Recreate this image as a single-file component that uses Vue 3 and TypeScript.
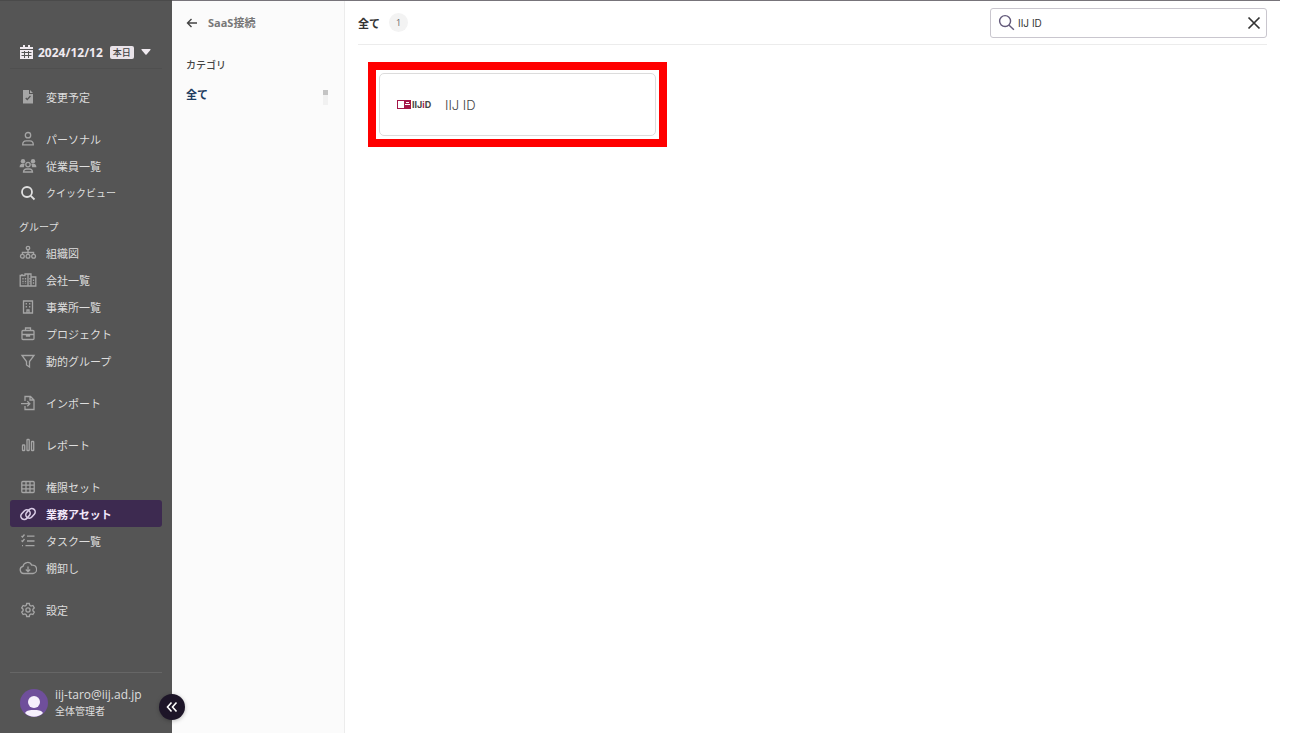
<script setup lang="ts">
import { ref } from 'vue'

type IconName =
  | 'file' | 'person' | 'people' | 'search' | 'org' | 'city' | 'building' | 'briefcase'
  | 'funnel' | 'import' | 'chart' | 'grid' | 'link' | 'tasks' | 'cloud' | 'gear'

interface NavItem { label: string; icon: IconName; active?: boolean; bright?: boolean }
interface NavGroup { heading?: string; items: NavItem[] }

const groups: NavGroup[] = [
  { items: [{ label: '変更予定', icon: 'file' }] },
  {
    items: [
      { label: 'パーソナル', icon: 'person' },
      { label: '従業員一覧', icon: 'people' },
      { label: 'クイックビュー', icon: 'search', bright: true },
    ],
  },
  {
    heading: 'グループ',
    items: [
      { label: '組織図', icon: 'org' },
      { label: '会社一覧', icon: 'city' },
      { label: '事業所一覧', icon: 'building' },
      { label: 'プロジェクト', icon: 'briefcase' },
      { label: '動的グループ', icon: 'funnel' },
    ],
  },
  { items: [{ label: 'インポート', icon: 'import' }] },
  { items: [{ label: 'レポート', icon: 'chart' }] },
  {
    items: [
      { label: '権限セット', icon: 'grid' },
      { label: '業務アセット', icon: 'link', active: true },
      { label: 'タスク一覧', icon: 'tasks' },
      { label: '棚卸し', icon: 'cloud' },
    ],
  },
  { items: [{ label: '設定', icon: 'gear' }] },
]

const icons: Record<IconName, string> = {
  file: '<path class="solid" fill-rule="evenodd" d="M4 2h6v4h4v9.5H4zM11 2l3 3h-3zM6.3 10.4l2 2 3.6-4-.9-.8-2.7 3-1.1-1.1z"/>',
  person: '<circle cx="9" cy="5.200" r="2.700"/><path d="M3.700 14.800c0-2.800 1.600-4 3.500-4h3.600c1.900 0 3.500 1.200 3.500 4z"/>',
  people: '<circle class="solid" cx="4" cy="4.300" r="2.200"/><circle class="solid" cx="14" cy="4.300" r="2.200"/><path class="solid" d="M.6 10.200c0-2.200 1-3.400 2.700-3.400h2.400L4.800 10.200zM17.400 10.200c0-2.200-1-3.400-2.700-3.400h-2.400l.9 3.400z"/><circle cx="9" cy="7.600" r="2.200"/><path d="M4.500 15c.2-2 1.300-3 3-3h3c1.700 0 2.800 1 3 3z"/>',
  search: '<circle cx="8" cy="8" r="5"/><path d="m11.800 11.800 3.700 3.700"/>',
  org: '<circle cx="9" cy="4" r="1.700"/><circle cx="3.400" cy="12.300" r="1.900"/><circle cx="9" cy="12.300" r="1.900"/><circle cx="14.600" cy="12.300" r="1.900"/><path d="M9 5.700v4.500M3.400 10.300V8.500h11.200v1.800"/>',
  city: '<path d="M9 15H1.200V4.500H3V3v1.500h3V3h3zM9 15V3h3v3h4.800v9zM12 6v9"/><path stroke-dasharray="1.400 1.400" d="M4 7v6M6.500 7v6M11 7v6M14.500 8.500v5"/>',
  building: '<path d="M4.500 3h9v12h-9zM8 15v-3h2v3"/><path stroke-dasharray="1.500 1.500" d="M7.300 5v6M10.700 5v6"/>',
  briefcase: '<rect x="3" y="5.500" width="12" height="9" rx="1"/><path d="M6.500 5.500V3h5v2.500M3 9.500h12M7.500 9.500v1.500h3V9.500"/>',
  funnel: '<path d="M3 3.500h12l-4.500 6V15l-3-2V9.500z"/>',
  import: '<path d="M6 7V2.500h5.500L15 6v9.500H6V12M11 2.500V6h4M2 9.700h8.500M8.300 7.200l2.500 2.500-2.500 2.500"/>',
  chart: '<rect x="3.500" y="9" width="2.200" height="5.500" rx=".6"/><rect x="8" y="3.500" width="2.200" height="11" rx=".6"/><rect x="12.500" y="5.500" width="2.200" height="9" rx=".6"/>',
  grid: '<rect x="2.800" y="3.500" width="12.400" height="11" rx="1"/><path d="M2.800 7.200h12.400M2.800 10.800h12.400M7 3.500v11M11 3.500v11"/>',
  link: '<rect x="1.200" y="6.300" width="10.600" height="6.800" rx="3.400" transform="rotate(-48 6.500 9.700)"/><rect x="6.200" y="4.900" width="10.600" height="6.800" rx="3.400" transform="rotate(-48 11.500 8.300)"/>',
  tasks: '<path d="m2.500 4 1 1 2-2.500M2.500 8.500l1 1 2-2.500M8 4.200h7.500M8 9h7.500M6.500 13.700h9M3 13.700h1"/>',
  cloud: '<path d="M5 14.500a3.600 3.600 0 0 1-1-7.100 4.600 4.600 0 0 1 8.700-1.300 4 4 0 0 1 1.300 8.400zM9 7.500v5M6.800 10.500 9 12.700l2.200-2.200"/>',
  gear: '<path d="m7.700 2.500-.5 1.900-1.200.7-1.900-.6-1.400 2.300 1.400 1.500v1.400l-1.400 1.500 1.400 2.300 1.900-.6 1.200.7.5 1.900h2.600l.5-1.900 1.200-.7 1.900.6 1.400-2.300-1.400-1.500V8.300l1.400-1.500-1.400-2.300-1.900.6-1.200-.7-.5-1.900z"/><circle cx="9" cy="9" r="2.100"/>',
}

const query = ref('IIJ ID')
</script>

<template>
  <div class="page">
    <aside class="sidebar">
      <button class="date" type="button">
        <svg class="calendar" viewBox="0 0 13 14" aria-hidden="true">
          <path d="M3 0h2v2h3V0h2v2h3v2H0V2h3zM0 5h13v9H0z" />
          <path class="lines" d="M1.500 7.500h10M1.500 10.500h10M4.500 6v7M8.500 6v7" />
        </svg>
        <span>2024/12/12</span>
        <span class="today">本日</span>
        <svg class="caret" viewBox="0 0 10 6" aria-hidden="true"><path d="M1 0h8q1 0 .4.900L5.600 5.500q-.6.600-1.200 0L.6.900Q0 0 1 0z" /></svg>
      </button>

      <nav class="nav">
        <section v-for="(group, i) in groups" :key="i">
          <h2 v-if="group.heading" class="nav-heading">{{ group.heading }}</h2>
          <a
            v-for="item in group.items"
            :key="item.label"
            href="#"
            class="nav-item"
            :class="{ active: item.active, bright: item.bright }"
          >
            <svg class="icon" viewBox="0 0 18 18" aria-hidden="true" v-html="icons[item.icon]"></svg>
            <span>{{ item.label }}</span>
          </a>
        </section>
      </nav>

      <div class="user">
        <svg class="avatar" viewBox="0 0 28 28" aria-hidden="true">
          <circle cx="14" cy="14" r="14" fill="#6f4f9b" />
          <circle cx="14" cy="13" r="6" fill="#f6f0fc" />
          <path d="M5 24c2-3 5-3 9-3s7 0 9 3c-5 5-13 5-18 0z" fill="#f6f0fc" />
        </svg>
        <div>
          <div class="email">iij-taro@iij.ad.jp</div>
          <div class="role">全体管理者</div>
        </div>
      </div>
      <button class="collapse" type="button" aria-label="メニューを閉じる">
        <svg viewBox="0 0 12 12" aria-hidden="true"><path d="M5.500 1.500 1.500 6l4 4.500M10.500 1.500 6.500 6l4 4.500" /></svg>
      </button>
    </aside>

    <aside class="panel">
      <a href="#" class="back">
        <svg viewBox="0 0 12 12" aria-hidden="true"><path d="M11 6H1.500M5.500 2l-4 4 4 4" /></svg>
        <span>SaaS接続</span>
      </a>
      <h2 class="panel-heading">カテゴリ</h2>
      <div class="category">
        <a href="#">全て</a>
        <span class="scroll"></span>
      </div>
    </aside>

    <main class="main">
      <header class="header">
        <h1>全て</h1>
        <span class="count">1</span>
        <div class="search">
          <svg class="glass" viewBox="0 0 18 18" aria-hidden="true"><circle cx="7.500" cy="7.500" r="5.800" /><path d="m11.800 11.800 5 5" /></svg>
          <input v-model="query" type="text" aria-label="検索" />
          <button type="button" aria-label="クリア" @click="query = ''">
            <svg viewBox="0 0 14 14" aria-hidden="true"><path d="m1.500 1.500 11 11M12.500 1.500l-11 11" /></svg>
          </button>
        </div>
      </header>
      <div class="cards">
        <div class="highlight">
          <a href="#" class="card">
            <svg class="logo" viewBox="0 0 36 12" aria-hidden="true">
              <rect x="0" y="1" width="14" height="9" fill="#a51648" />
              <rect x="1" y="2" width="6" height="7" fill="#fff" />
              <path d="M9 3.500h3M8 5.500h5" stroke="#fff" />
              <text x="15" y="9">IIJ<tspan fill="#b02050">i</tspan>D</text>
            </svg>
            <span>IIJ ID</span>
          </a>
        </div>
      </div>
    </main>
  </div>
</template>

<style>
body { background: #fff; }
</style>

<style scoped>
.page {
  display: flex;
  min-height: 100vh;
  box-sizing: border-box;
  padding-right: 9px;
  font-family: "Open Sans", "Noto Sans CJK JP", sans-serif;
  font-size: 11px;
  color: #333;
  background: linear-gradient(#77747a, #77747a) no-repeat 0 0 / calc(100% - 9px) 1px;
}
h1, h2 { margin: 0; }
a { color: inherit; text-decoration: none; }
button { padding: 0; border: 0; background: none; color: inherit; font: inherit; cursor: pointer; }
svg { flex: none; fill: none; stroke: currentColor; }

.sidebar {
  position: relative;
  display: flex;
  flex: none;
  flex-direction: column;
  box-sizing: border-box;
  width: 172px;
  padding: 35px 10px 0;
  background: #555;
  border-top: 1px solid #4a4a4a;
  color: #dedede;
}
.date {
  display: flex;
  align-items: center;
  height: 33px;
  padding: 0 10px;
  border-bottom: 1px solid #4f4f4f;
  color: #f0eaf0;
  font-size: 12px;
  font-weight: 700;
}
.calendar { width: 13px; height: 14px; margin-right: 5px; fill: currentColor; stroke: none; }
.calendar .lines { stroke: #555; }
.today {
  margin: 0 7px;
  padding: 0 3px;
  border-radius: 2px;
  background: #e9e3e9;
  color: #444;
  font-size: 9px;
  font-weight: 500;
  line-height: 13px;
}
.caret { width: 10px; height: 6px; fill: currentColor; stroke: none; }
.nav { display: flex; flex-direction: column; gap: 15px; padding-top: 14px; }
.nav-heading { padding: 0 9px 6px; font-size: 10px; font-weight: 400; line-height: 12px; }
.nav-item { display: flex; align-items: center; gap: 9px; height: 27px; padding: 0 9px; border-radius: 3px; }
.icon { width: 18px; height: 18px; color: #a5a5a5; stroke-width: 1.300; }
.icon :deep(.solid) { fill: currentColor; stroke: none; }
.bright { font-size: 10px; }
.bright .icon { color: #e0e0e0; stroke-width: 1.800; }
.active { background: #3d2a50; color: #f3e9fa; font-weight: 700; }
.active .icon { color: #d9cce6; stroke-width: 1.600; }
.user {
  display: flex;
  align-items: center;
  gap: 7px;
  height: 60px;
  margin-top: auto;
  padding-left: 10px;
  border-top: 1px solid #666;
}
.avatar { width: 28px; height: 28px; stroke: none; }
.email { font-size: 12px; line-height: 16px; }
.role { font-size: 10px; line-height: 16px; }
.collapse {
  position: absolute;
  right: -13px;
  bottom: 13px;
  display: grid;
  place-items: center;
  width: 26px;
  height: 26px;
  border-radius: 50%;
  background: #1d1528;
  box-shadow: 0 1px 4px #0004;
  color: #fff;
}
.collapse svg { width: 12px; height: 12px; stroke-width: 1.600; }

.panel {
  flex: none;
  box-sizing: border-box;
  width: 173px;
  margin-top: 1px;
  padding: 13px 16px 0 14px;
  border-right: 1px solid #ececec;
  background: #fbfbfb;
}
.back { display: flex; align-items: center; gap: 10px; color: #777; font-weight: 700; line-height: 18px; }
.back svg { width: 12px; height: 12px; color: #444; stroke-width: 1.400; }
.panel-heading { margin-top: 25px; color: #444; font-size: 10px; font-weight: 500; line-height: 16px; }
.category { display: flex; align-items: flex-start; justify-content: space-between; margin-top: 13px; color: #1d3b5e; font-weight: 700; line-height: 18px; }
.scroll { width: 5px; height: 15px; margin-top: 4px; background: linear-gradient(#c4c4c4 5px, #f1f1f1 5px); }

.main { flex: 1; min-width: 0; margin-top: 1px; padding: 0 13px; }
.header { display: flex; align-items: center; height: 43px; border-bottom: 1px solid #ececec; }
h1 { font-size: 11px; font-weight: 700; }
.count { width: 19px; margin-left: 9px; border-radius: 50%; background: #f3f3f3; color: #666; font-size: 9px; line-height: 19px; text-align: center; }
.search {
  display: flex;
  align-items: center;
  box-sizing: border-box;
  width: 277px;
  height: 30px;
  margin-left: auto;
  padding: 0 5px 0 7px;
  border: 1px solid #c9c6ce;
  border-radius: 3px;
}
.glass { width: 17px; height: 17px; color: #62597a; stroke-width: 1.500; }
.search input { flex: 1; min-width: 0; padding: 0; margin-left: 3px; border: 0; outline: 0; background: none; color: #333; font: 10px Inter, sans-serif; }
.search button { display: grid; }
.search button svg { width: 14px; height: 14px; stroke-width: 1.700; }
.cards { display: grid; grid-template-columns: repeat(auto-fill, 299px); padding: 17px 10px; }
.highlight { padding: 3px; border: 8px solid #f00; }
.card {
  display: flex;
  align-items: center;
  gap: 12px;
  height: 61px;
  padding: 0 17px;
  border: 1px solid #dcdcdc;
  border-radius: 5px;
  color: #444;
  font-family: Inter, sans-serif;
  font-size: 13px;
  font-weight: 300;
}
.logo { width: 36px; height: 12px; stroke: none; }
.logo text { fill: #444; font-size: 9px; font-weight: 700; }
</style>
